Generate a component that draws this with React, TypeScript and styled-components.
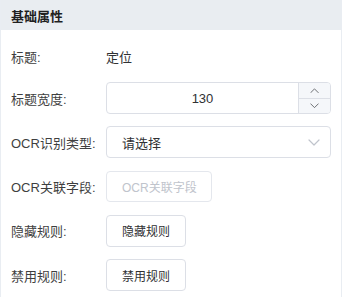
import styled, { createGlobalStyle } from "styled-components"

const GlobalStyle = createGlobalStyle`
  html, body {
    margin: 0;
    padding: 0;
    background: #ffffff;
  }
  body {
    font-family: "Liberation Sans", "Noto Sans CJK SC", sans-serif;
    -webkit-font-smoothing: antialiased;
  }
`;

const Panel = styled.div`
  width: 342px;
  height: 297px;
  box-sizing: border-box;
  border-left: 1px solid #e9edf2;
  border-right: 1px solid #e9edf2;
  background: #ffffff;
`;

const Header = styled.div`
  height: 30px;
  display: flex;
  align-items: center;
  padding-left: 10px;
  background: #e9edf1;
  font-size: 13px;
  font-weight: bold;
  color: #1f1f1f;
`;

const Body = styled.div`
  padding: 10px 10px 0 10px;
`;

const Row = styled.div<{ $gap: number }>`
  display: flex;
  align-items: center;
  height: 32px;
  margin-bottom: ${(p) => p.$gap}px;
`;

const Label = styled.div`
  width: 95px;
  flex-shrink: 0;
  font-size: 13px;
  color: #3f3f3f;
`;

const Value = styled.div`
  font-size: 13px;
  color: #303133;
`;

const NumberBox = styled.div`
  width: 225px;
  height: 32px;
  box-sizing: border-box;
  border: 1px solid #dcdfe6;
  border-radius: 4px;
  display: flex;
  overflow: hidden;
`;

const NumberText = styled.div`
  flex: 1;
  display: flex;
  align-items: center;
  justify-content: center;
  padding-left: 15px;
  padding-right: 15px;
  font-size: 13px;
  color: #303133;
`;

const Spinner = styled.div`
  width: 31px;
  border-left: 1px solid #dcdfe6;
  background: #f5f7fa;
  display: flex;
  flex-direction: column;
`;

const SpinBtn = styled.div<{ $top?: boolean }>`
  flex: 1;
  display: flex;
  align-items: center;
  justify-content: center;
  color: #606266;
  border-bottom: ${(p) => (p.$top ? "1px solid #dcdfe6" : "none")};
`;

const SelectBox = styled.div`
  width: 225px;
  height: 32px;
  box-sizing: border-box;
  border: 1px solid #dcdfe6;
  border-radius: 4px;
  display: flex;
  align-items: center;
  justify-content: space-between;
  padding: 0 10px 0 15px;
  font-size: 13px;
  color: #303133;
`;

const DisabledInput = styled.div`
  width: 106px;
  height: 31px;
  box-sizing: border-box;
  border: 1px solid #e4e7ed;
  border-radius: 4px;
  display: flex;
  align-items: center;
  padding: 0 0 0 15px;
  font-size: 12px;
  color: #c0c4cc;
  white-space: nowrap;
  overflow: hidden;
`;

const Button = styled.button`
  height: 32px;
  box-sizing: border-box;
  padding: 0 15px;
  border: 1px solid #dcdfe6;
  border-radius: 4px;
  background: #ffffff;
  font-family: inherit;
  font-size: 12px;
  color: #303133;
  cursor: pointer;
`;

const Chevron = ({ up, color, size }: { up?: boolean; color: string; size: number }) => (
  <svg width={size} height={size / 2 + 1} viewBox="0 0 12 7" fill="none">
    <path
      d={up ? "M1 6 L6 1 L11 6" : "M1 1 L6 6 L11 1"}
      stroke={color}
      strokeWidth="1.2"
      strokeLinecap="round"
      strokeLinejoin="round"
    />
  </svg>
);

export default function App() {
  return (
    <>
      <GlobalStyle />
      <Panel>
        <Header>基础属性</Header>
        <Body>
          <Row $gap={10}>
            <Label>标题:</Label>
            <Value>定位</Value>
          </Row>
          <Row $gap={12.33}>
            <Label>标题宽度:</Label>
            <NumberBox>
              <NumberText>130</NumberText>
              <Spinner>
                <SpinBtn $top>
                  <Chevron up color="#606266" size={9} />
                </SpinBtn>
                <SpinBtn>
                  <Chevron color="#606266" size={9} />
                </SpinBtn>
              </Spinner>
            </NumberBox>
          </Row>
          <Row $gap={12.33}>
            <Label>OCR识别类型:</Label>
            <SelectBox>
              <span>请选择</span>
              <Chevron color="#c0c4cc" size={12} />
            </SelectBox>
          </Row>
          <Row $gap={12.33}>
            <Label>OCR关联字段:</Label>
            <DisabledInput>OCR关联字段</DisabledInput>
          </Row>
          <Row $gap={12.33}>
            <Label>隐藏规则:</Label>
            <Button>隐藏规则</Button>
          </Row>
          <Row $gap={0}>
            <Label>禁用规则:</Label>
            <Button>禁用规则</Button>
          </Row>
        </Body>
      </Panel>
    </>
  );
}
